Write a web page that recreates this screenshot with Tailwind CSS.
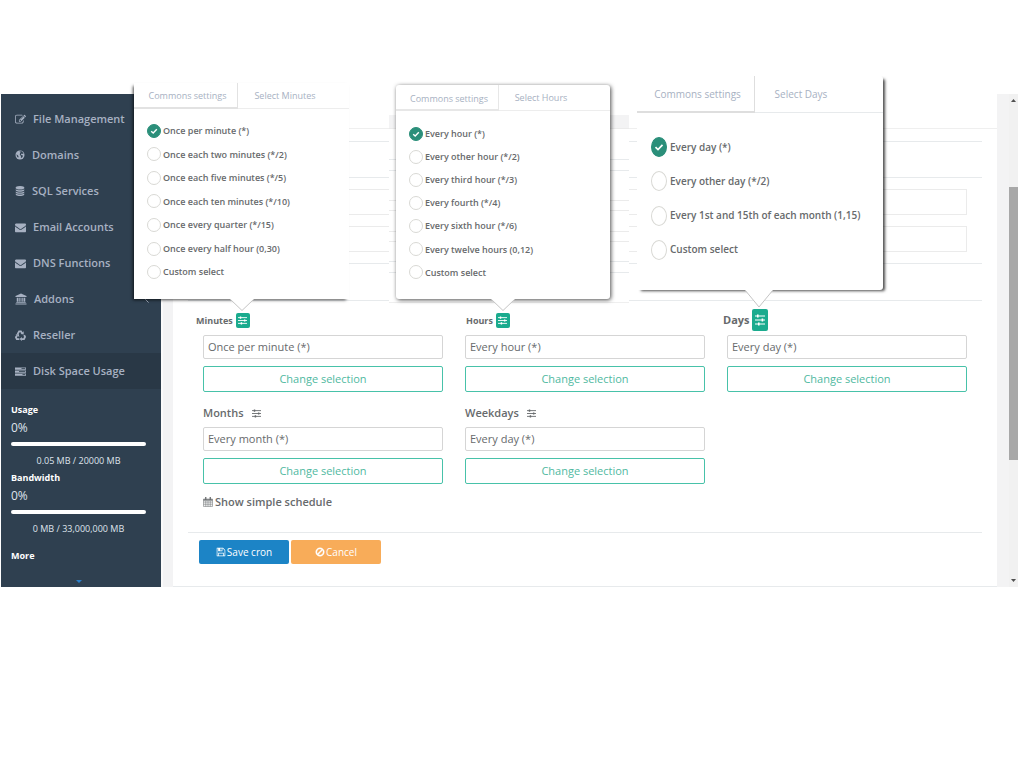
<!DOCTYPE html>
<html lang="en">
<head>
  <meta charset="UTF-8" />
  <meta name="viewport" content="width=device-width, initial-scale=1.0"/>
  <title>Cron schedule</title>
  <script src="https://cdn.jsdelivr.net/npm/@tailwindcss/browser@4"></script>
</head>
<body class="bg-white font-['Open_Sans',sans-serif] text-[11px] text-[#676a6c]">

  <!-- Shared icons -->
  <svg class="hidden">
    <symbol id="sliders" viewBox="0 0 10 10">
      <path d="M0 1.8h10M0 5h10M0 8.2h10" stroke="currentColor" stroke-width="1"/>
      <path d="M2 .6h1.6v2.4H2zM6.6 3.8h1.6v2.4H6.6zM3 7h1.6v2.4H3z" fill="currentColor"/>
    </symbol>
    <symbol id="check" viewBox="0 0 10 10">
      <path d="M1.5 5.2l2.5 2.4 4.5-4.8" fill="none" stroke="currentColor" stroke-width="1.7"/>
    </symbol>
    <symbol id="envelope" viewBox="0 0 1792 1792">
      <path fill="currentColor" d="M1792 710v794q0 66-47 113t-113 47h-1472q-66 0-113-47t-47-113v-794q44 49 101 87 362 246 497 345 57 42 92.5 65.5t94.5 48 110 24.5h2q51 0 110-24.5t94.5-48 92.5-65.5q170-123 498-345 57-39 100-87zm0-294q0 79-49 151t-122 123q-376 261-468 325-10 7-42.5 31t-54 38.5-52 32.5-57.5 27-50 9h-2q-23 0-50-9t-57.5-27-52-32.5-54-38.5-42.5-31q-91-64-262-182.5t-205-142.5q-62-42-117-115.5t-55-136.5q0-78 41.5-130t118.5-52h1472q65 0 112.5 47t47.5 113z"/>
    </symbol>
  </svg>

  <div class="flex px-px pt-[94px]">

    <!-- Sidebar -->
    <aside class="w-40 shrink-0 bg-[#2f4050] pt-[7px] text-[#a7b1c2]">
      <nav class="text-[11px] font-semibold">
        <a href="#" class="flex h-9 items-center gap-[7px] pl-[14px]">
          <svg class="size-[11px]" viewBox="0 0 1792 1792"><path fill="currentColor" d="M888 1184l116-116-152-152-116 116v56h96v96h56zm440-720q-16-16-33 1l-350 350q-17 17-1 33t33-1l350-350q17-17 1-33zm80 594v190q0 119-84.5 203.5t-203.5 84.5h-832q-119 0-203.5-84.5t-84.5-203.5v-832q0-119 84.5-203.5t203.5-84.5h832q63 0 117 25 15 7 18 23 3 17-9 29l-49 49q-14 14-32 8-23-6-45-6h-832q-66 0-113 47t-47 113v832q0 66 47 113t113 47h832q66 0 113-47t47-113v-126q0-13 9-22l64-64q15-15 35-7t20 29zm-96-738l288 288-672 672h-288v-288zm444 132l-92 92-288-288 92-92q28-28 68-28t68 28l152 152q28 28 28 68t-28 68z"/></svg>
          File Management
        </a>
        <a href="#" class="flex h-9 items-center gap-[7px] pl-[14px]">
          <svg class="size-[10px]" viewBox="0 0 20 20"><circle cx="10" cy="10" r="9" fill="currentColor"/><path fill="#2f4050" d="M9 3l4.500-.5 3.500 4-1 1.500-2.500-.8-2 1.800 2 1.500 2.500.5-1 3-2.500 2-1-1.500.5-2.500-2.500-2.500.5-3 1.500-1.500-2-1zM3 8.500l2.500 2 1.500 2-.5 3-2.500-2.500z"/></svg>
          Domains
        </a>
        <a href="#" class="flex h-9 items-center gap-[7px] pl-[14px]">
          <svg class="size-[10px]" viewBox="0 0 1792 1792"><path fill="currentColor" d="M896 768q237 0 443-43t325-127v170q0 69-103 128t-280 93.500-385 34.500-385-34.500-280-93.500-103-128v-170q119 84 325 127t443 43zm0 768q237 0 443-43t325-127v170q0 69-103 128t-280 93.500-385 34.500-385-34.500-280-93.500-103-128v-170q119 84 325 127t443 43zm0-384q237 0 443-43t325-127v170q0 69-103 128t-280 93.500-385 34.500-385-34.500-280-93.500-103-128v-170q119 84 325 127t443 43zm0-1152q208 0 385 34.500t280 93.500 103 128v128q0 69-103 128t-280 93.500-385 34.500-385-34.500-280-93.500-103-128v-128q0-69 103-128t280-93.500 385-34.500z"/></svg>
          SQL Services
        </a>
        <a href="#" class="flex h-9 items-center gap-[7px] pl-[14px]">
          <svg class="size-[11px]"><use href="#envelope"/></svg>
          Email Accounts
        </a>
        <a href="#" class="flex h-9 items-center gap-[7px] pl-[14px]">
          <svg class="size-[11px]"><use href="#envelope"/></svg>
          DNS Functions
        </a>
        <a href="#" class="flex h-9 items-center gap-[7px] pl-[14px] pr-3">
          <svg class="size-3" viewBox="0 0 24 24"><path fill="currentColor" d="M12 1l11 5v2H1V6zM3.500 9.500H7v8H3.500zM8.500 9.500H11v8H8.500zM13 9.500h2.500v8H13zM17 9.500h3.500v8H17zM2.500 18.500h19v1.500h-19zM1 21h22v2H1z"/></svg>
          Addons
          <svg class="ml-auto h-[7px] w-1" viewBox="0 0 4 7"><path d="M3.500 .5l-3 3 3 3" fill="none" stroke="currentColor"/></svg>
        </a>
        <a href="#" class="flex h-9 items-center gap-[7px] pl-[14px]">
          <svg class="size-[11px]" viewBox="0 0 24 24" fill="none" stroke="currentColor" stroke-width="4"><path d="M5.500 9L9 3h4l2.500 4M20 11l2 4-2.500 5H14M9.500 20H4l-2-4 2.500-4"/><path fill="currentColor" stroke="none" d="M19 2.500V10l-7-1.500zM15 15v9l-5-4.500zM1 10l7-1.500 1.500 7z"/></svg>
          Reseller
        </a>
        <a href="#" class="flex h-9 items-center gap-[7px] bg-[#293846] pl-[14px]">
          <svg class="size-[11px]" viewBox="0 0 22 22"><path fill="currentColor" d="M0 3h22v4.500H0zM0 9h22v4.500H0zM0 15h22v4.500H0z"/><path fill="#293846" d="M13 4.500h7.500V6H13zM8 10.500h12.500V12H8zM15 16.500h5.500V18H15z"/></svg>
          Disk Space Usage
        </a>
      </nav>

      <div class="px-[10px] pt-[13px] pr-[15px] text-[9px] leading-4">
        <div class="h-[68px]">
          <h4 class="font-bold text-white">Usage</h4>
          <p class="text-[12px] leading-5 text-[#dfe4ed]">0%</p>
          <div class="mt-1 h-1 rounded-full bg-white"></div>
          <p class="mt-[7px] text-center text-[#dfe4ed]">0.05 MB / 20000 MB</p>
        </div>
        <div class="h-[68px]">
          <h4 class="font-bold text-white">Bandwidth</h4>
          <p class="text-[12px] leading-5 text-[#dfe4ed]">0%</p>
          <div class="mt-1 h-1 rounded-full bg-white"></div>
          <p class="mt-[7px] text-center text-[#dfe4ed]">0 MB / 33,000,000 MB</p>
        </div>
        <h4 class="mt-[10px] font-bold text-white">More</h4>
        <svg class="mx-auto mt-4 h-[3px] w-[6px]" viewBox="0 0 6 3"><path d="M0 0h6L3 3z" fill="#2a7fc9"/></svg>
      </div>
    </aside>

    <!-- Content -->
    <main class="flex min-w-0 flex-1 border-l-2 border-[#fafafa] bg-[#f3f3f4] pl-[10px] pr-3">
      <div class="min-w-0 flex-1 border-b border-[#e7eaec] bg-white">
        <div class="h-[35px] border-b border-[#efefef]"></div>

        <form class="px-[15px] pt-3">
          <div class="h-[37px] border-y border-[#e7eaec]"></div>
          <div class="flex flex-col gap-[11px] px-[15px] py-[11px]">
            <input aria-label="Description" class="h-[26px] w-full border border-[#ebebeb]"/>
            <input aria-label="Command" class="h-[26px] w-full border border-[#ebebeb]"/>
          </div>
          <div class="h-[38px] border-y border-[#e7eaec]"></div>

          <div class="grid grid-cols-3 gap-x-[22px] gap-y-2 px-[15px] pt-[7px]">

            <!-- Minutes -->
            <div class="relative">
              <div class="-ml-[7px] flex h-[27px] items-center gap-[3px] pb-[2px]">
                <label for="minutes" class="text-[9px] font-bold">Minutes</label>
                <button type="button" aria-label="Minutes options" class="flex h-[15px] w-[14px] items-center justify-center rounded-[2px] bg-[#1aab8e] text-white"><svg class="size-[9px]"><use href="#sliders"/></svg></button>
              </div>
              <input id="minutes" value="Once per minute (*)" class="block h-6 w-full rounded-[2px] border border-[#d5d5d5] px-1 pb-px"/>
              <button type="button" class="mt-[7px] block h-[26px] w-full rounded-[2px] border border-[#48c2a9] text-[#4fb99f]">Change selection</button>

              <div class="absolute bottom-full -left-[69px] z-10 mb-[9px] w-[215px] bg-white shadow-[-2px_2px_3px_-1px_rgba(0,0,0,0.7)]">
                <div class="flex h-[26px] border-b border-[#ededed] text-[9px] font-medium text-[#a7b1c2]">
                  <button type="button" class="-mb-px w-[104px] border-r border-b-2 border-[#e2e2e2] pt-[2px] pl-1">Commons settings</button>
                  <button type="button" class="w-[94px]">Select Minutes</button>
                </div>
                <div class="mt-[10px] mb-[15px] grid h-[165px] grid-rows-7 pl-[13px] text-[9px] font-semibold">
                  <label class="relative flex items-center gap-[2px]"><input type="radio" name="m" checked class="size-[14px] appearance-none rounded-full border border-[#d9d9d5] checked:border-[#2b8f7a] checked:bg-[#2b8f7a]"/><svg class="absolute left-[3px] size-2 text-white"><use href="#check"/></svg>Once per minute (*)</label>
                  <label class="flex items-center gap-[2px]"><input type="radio" name="m" class="size-[14px] appearance-none rounded-full border border-[#d9d9d5]"/>Once each two minutes (*/2)</label>
                  <label class="flex items-center gap-[2px]"><input type="radio" name="m" class="size-[14px] appearance-none rounded-full border border-[#d9d9d5]"/>Once each five minutes (*/5)</label>
                  <label class="flex items-center gap-[2px]"><input type="radio" name="m" class="size-[14px] appearance-none rounded-full border border-[#d9d9d5]"/>Once each ten minutes (*/10)</label>
                  <label class="flex items-center gap-[2px]"><input type="radio" name="m" class="size-[14px] appearance-none rounded-full border border-[#d9d9d5]"/>Once every quarter (*/15)</label>
                  <label class="flex items-center gap-[2px]"><input type="radio" name="m" class="size-[14px] appearance-none rounded-full border border-[#d9d9d5]"/>Once every half hour (0,30)</label>
                  <label class="flex items-center gap-[2px]"><input type="radio" name="m" class="size-[14px] appearance-none rounded-full border border-[#d9d9d5]"/>Custom select</label>
                </div>
                <svg class="absolute top-full left-24 h-3 w-6" viewBox="0 0 24 12"><path d="M0 0l12 11.500L24 0" fill="#fff" stroke="#c4c4c4"/></svg>
              </div>
            </div>

            <!-- Hours -->
            <div class="relative">
              <div class="ml-px flex h-[27px] items-center gap-[3px] pb-[2px]">
                <label for="hours" class="text-[9px] font-bold">Hours</label>
                <button type="button" aria-label="Hours options" class="flex h-[15px] w-[14px] items-center justify-center rounded-[2px] bg-[#1aab8e] text-white"><svg class="size-[9px]"><use href="#sliders"/></svg></button>
              </div>
              <input id="hours" value="Every hour (*)" class="block h-6 w-full rounded-[2px] border border-[#d5d5d5] px-1 pb-px"/>
              <button type="button" class="mt-[7px] block h-[26px] w-full rounded-[2px] border border-[#48c2a9] text-[#4fb99f]">Change selection</button>

              <!-- scrolled form rows behind the popover -->
              <div class="absolute bottom-full -left-[76px] mb-[5px] w-60 bg-white">
                <div class="h-[14px] border-b border-[#ebebeb] bg-[#f3f3f4]"></div>
                <div class="mt-[30px] h-3 border-y border-[#e7eaec]"></div>
                <div class="mt-[29px] h-[11px] border-y border-[#ebebeb]"></div>
                <div class="mt-5 h-[11px] border-y border-[#ebebeb]"></div>
                <div class="mt-[19px] h-3 border-y border-[#e7eaec]"></div>
                <div class="h-[30px] border-b border-[#efefef]"></div>
              </div>
              <div class="absolute bottom-full -left-[69px] z-10 mb-[9px] w-[214px] rounded-[3px] bg-white shadow-[1px_1px_4px_rgba(0,0,0,0.7)]">
                <div class="flex h-[26px] border-b border-[#ededed] text-[9px] font-medium text-[#a7b1c2]">
                  <button type="button" class="-mb-px w-[103px] border-r border-b-2 border-[#e7e7e7] pt-[3px] pl-1">Commons settings</button>
                  <button type="button" class="w-[84px] pt-px">Select Hours</button>
                </div>
                <div class="mt-[11px] mb-[15px] grid h-[162px] grid-rows-7 pl-[13px] text-[9px] font-semibold">
                  <label class="relative flex items-center gap-[2px]"><input type="radio" name="h" checked class="size-[14px] appearance-none rounded-full border border-[#d9d9d5] checked:border-[#2b8f7a] checked:bg-[#2b8f7a]"/><svg class="absolute left-[3px] size-2 text-white"><use href="#check"/></svg>Every hour (*)</label>
                  <label class="flex items-center gap-[2px]"><input type="radio" name="h" class="size-[14px] appearance-none rounded-full border border-[#d9d9d5]"/>Every other hour (*/2)</label>
                  <label class="flex items-center gap-[2px]"><input type="radio" name="h" class="size-[14px] appearance-none rounded-full border border-[#d9d9d5]"/>Every third hour (*/3)</label>
                  <label class="flex items-center gap-[2px]"><input type="radio" name="h" class="size-[14px] appearance-none rounded-full border border-[#d9d9d5]"/>Every fourth (*/4)</label>
                  <label class="flex items-center gap-[2px]"><input type="radio" name="h" class="size-[14px] appearance-none rounded-full border border-[#d9d9d5]"/>Every sixth hour (*/6)</label>
                  <label class="flex items-center gap-[2px]"><input type="radio" name="h" class="size-[14px] appearance-none rounded-full border border-[#d9d9d5]"/>Every twelve hours (0,12)</label>
                  <label class="flex items-center gap-[2px]"><input type="radio" name="h" class="size-[14px] appearance-none rounded-full border border-[#d9d9d5]"/>Custom select</label>
                </div>
                <svg class="absolute top-full left-[95px] h-3 w-6" viewBox="0 0 24 12"><path d="M0 0l12 11.500L24 0" fill="#fff" stroke="#c4c4c4"/></svg>
              </div>
            </div>

            <!-- Days -->
            <div class="relative">
              <div class="-ml-1 flex h-[27px] items-center gap-[2px] pb-[3px]">
                <label for="days" class="text-[11px] font-bold">Days</label>
                <button type="button" aria-label="Days options" class="flex h-[22px] w-4 items-center justify-center rounded-[2px] bg-[#1aab8e] text-white"><svg class="h-3 w-[10px]" viewBox="0 0 10 12"><path d="M0 2h10M0 6h10M0 10h10" stroke="currentColor"/><path d="M2 .5h1.600v3H2zM6.600 4.500h1.600v3H6.600zM3 8.500h1.600v3H3z" fill="currentColor"/></svg></button>
              </div>
              <input id="days" value="Every day (*)" class="block h-6 w-full rounded-[2px] border border-[#d5d5d5] px-1 pb-px"/>
              <button type="button" class="mt-[7px] block h-[26px] w-full rounded-[2px] border border-[#48c2a9] text-[#4fb99f]">Change selection</button>

              <div class="absolute bottom-full -left-[90px] z-10 mb-[18px] w-[246px] rounded-r-[3px] bg-white shadow-[3px_2px_3px_-1px_rgba(0,0,0,0.7)]">
                <div class="flex h-[37px] border-b border-[#e7eaec] text-[10px] font-medium text-[#a7b1c2]">
                  <button type="button" class="-mb-px w-[118px] border-r border-b-2 border-[#dedede] pt-[2px] pl-1">Commons settings</button>
                  <button type="button" class="w-[92px]">Select Days</button>
                </div>
                <div class="mt-[17px] mb-[23px] grid h-[137px] grid-rows-4 pl-[14px] text-[10px] font-semibold">
                  <label class="relative flex items-center gap-[3px]"><input type="radio" name="d" checked class="h-5 w-4 appearance-none rounded-[50%] border border-[#d9d9d5] checked:border-[#2b8f7a] checked:bg-[#2b8f7a]"/><svg class="absolute left-[3px] size-[10px] text-white"><use href="#check"/></svg>Every day (*)</label>
                  <label class="flex items-center gap-[3px]"><input type="radio" name="d" class="h-5 w-4 appearance-none rounded-[50%] border border-[#d9d9d5]"/>Every other day (*/2)</label>
                  <label class="flex items-center gap-[3px]"><input type="radio" name="d" class="h-5 w-4 appearance-none rounded-[50%] border border-[#d9d9d5]"/>Every 1st and 15th of each month (1,15)</label>
                  <label class="flex items-center gap-[3px]"><input type="radio" name="d" class="h-5 w-4 appearance-none rounded-[50%] border border-[#d9d9d5]"/>Custom select</label>
                </div>
                <svg class="absolute top-full left-[108px] h-[18px] w-7" viewBox="0 0 28 18"><path d="M0 0l14 17L28 0" fill="#fff" stroke="#c4c4c4"/></svg>
              </div>
            </div>

            <!-- Months -->
            <div>
              <div class="flex h-[27px] items-center gap-2">
                <label for="months" class="font-semibold">Months</label>
                <svg class="size-[9px]"><use href="#sliders"/></svg>
              </div>
              <input id="months" value="Every month (*)" class="block h-6 w-full rounded-[2px] border border-[#d5d5d5] px-1 pb-px"/>
              <button type="button" class="mt-[7px] block h-[26px] w-full rounded-[2px] border border-[#48c2a9] text-[#4fb99f]">Change selection</button>
            </div>

            <!-- Weekdays -->
            <div>
              <div class="flex h-[27px] items-center gap-2">
                <label for="weekdays" class="font-semibold">Weekdays</label>
                <svg class="size-[9px]"><use href="#sliders"/></svg>
              </div>
              <input id="weekdays" value="Every day (*)" class="block h-6 w-full rounded-[2px] border border-[#d5d5d5] px-1 pb-px"/>
              <button type="button" class="mt-[7px] block h-[26px] w-full rounded-[2px] border border-[#48c2a9] text-[#4fb99f]">Change selection</button>
            </div>
          </div>

          <a href="#" class="mt-[10px] ml-[15px] flex h-4 items-center gap-[2px] font-semibold">
            <svg class="size-[10px]" viewBox="0 0 20 20" fill="none" stroke="currentColor"><path stroke-width="1" d="M1 4h18v15H1zM1 8h18M1 11.700h18M1 15.400h18M5.500 8v11M10 8v11M14.500 8v11"/><path stroke-width="2.500" d="M5.500 0v6M14.500 0v6M1 5.500h18"/></svg>
            Show simple schedule
          </a>

          <div class="mt-[22px] flex gap-[2px] border-t border-[#e7eaec] pt-[7px] pb-[22px] pl-[11px] text-[10px] text-white">
            <button class="flex h-6 w-[90px] items-center justify-center gap-px rounded-[2px] bg-[#1c84c6]">
              <svg class="size-[10px]" viewBox="0 0 1792 1792"><path fill="currentColor" d="M512 1536h768v-384h-768v384zm896 0h128v-896q0-14-10-38.500t-20-34.500l-281-281q-10-10-34-20t-39-10v416q0 40-28 68t-68 28h-576q-40 0-68-28t-28-68v-416h-128v1280h128v-416q0-40 28-68t68-28h832q40 0 68 28t28 68v416zm-384-928v-320q0-13-9.500-22.500t-22.500-9.500h-192q-13 0-22.500 9.500t-9.500 22.500v320q0 13 9.500 22.500t22.500 9.500h192q13 0 22.500-9.500t9.500-22.500zm640 32v928q0 40-28 68t-68 28h-1344q-40 0-68-28t-28-68v-1344q0-40 28-68t68-28h928q40 0 88 20t76 48l280 280q28 28 48 76t20 88z"/></svg>
              Save cron
            </button>
            <button type="button" class="flex h-6 w-[90px] items-center justify-center gap-px rounded-[2px] bg-[#f8ac59]">
              <svg class="size-[10px]" viewBox="0 0 1792 1792"><path fill="currentColor" stroke="currentColor" stroke-width="60" d="M1440 893q0-161-87-295l-754 753q137 89 297 89 111 0 211.500-43.500t173.500-116.500 116-174.500 43-212.500zm-999 299l755-754q-135-91-300-91-148 0-273 73t-198 199-73 274q0 162 89 299zm1223-299q0 157-61 300t-163.500 246-245 164-298.500 61-298.500-61-245-164-163.500-246-61-300 61-299.500 163.500-245.500 245-164 298.500-61 298.500 61 245 164 163.500 245.500 61 299.500z"/></svg>
              Cancel
            </button>
          </div>
        </form>
      </div>
    </main>

    <!-- Scroll track -->
    <div class="flex w-[9px] shrink-0 flex-col items-center bg-[#f1f1f1] py-[5px]">
      <svg class="h-[3px] w-[5px]" viewBox="0 0 5 3"><path d="M0 3h5L2.500 0z" fill="#505050"/></svg>
      <div class="mt-[85px] h-[273px] w-full bg-[#a8a8a8]"></div>
      <svg class="mt-auto h-[3px] w-[5px]" viewBox="0 0 5 3"><path d="M0 0h5L2.500 3z" fill="#505050"/></svg>
    </div>
  </div>
</body>
</html>
